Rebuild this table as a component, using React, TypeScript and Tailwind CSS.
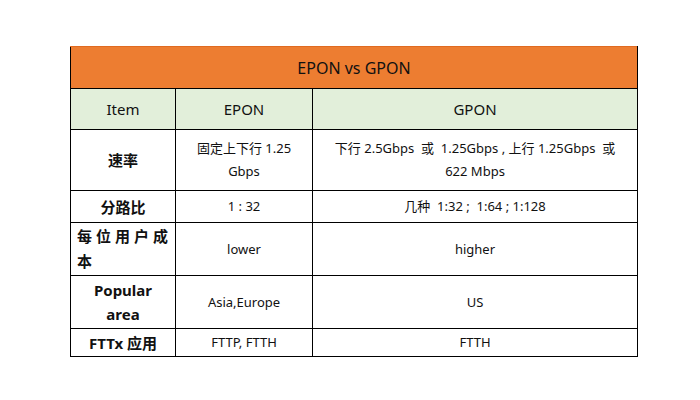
const rows = [
  { h: "h-[61px]", item: "速率", epon: "固定上下行 1.25 Gbps", gpon: "下行 2.5Gbps\u00a0 或\u00a0 1.25Gbps\u00a0,\u00a0上行 1.25Gbps\u00a0 或 622\u00a0Mbps" },
  { h: "h-[32px]", item: "分路比", epon: "1\u00a0:\u00a032", gpon: "几种\u00a0 1:32 ;\u00a0 1:64 ; 1:128" },
  { h: "h-[53px]", item: "每位用户成本", epon: "lower", gpon: "higher", justify: true },
  { h: "h-[53px]", item: "Popular area", epon: "Asia,Europe", gpon: "US" },
  { h: "h-[28px]", item: "FTTx 应用", epon: "FTTP, FTTH", gpon: "FTTH" },
];

const App = () => {
  return (
    <div
      className="w-[700px] h-[400px] bg-white pt-[46px] pl-[70px] text-[#111]"
      style={{ fontFamily: '"Noto Sans", "Noto Sans CJK SC", sans-serif' }}
    >
      <table className="w-[567px] table-fixed border-collapse">
        <colgroup>
          <col className="w-[105px]" />
          <col className="w-[137px]" />
          <col className="w-[325px]" />
        </colgroup>
        <tbody>
          <tr className="h-[42px]">
            <td
              colSpan={3}
              className="bg-[#ed7d31] border-t border-t-[#e06a20] border-x border-x-black border-b border-b-black text-center text-[16px]"
            >
              EPON vs GPON
            </td>
          </tr>
          <tr className="h-[41px] bg-[#e2efda] text-[15px]">
            <td className="border border-black text-center">Item</td>
            <td className="border border-black text-center">EPON</td>
            <td className="border border-black text-center">GPON</td>
          </tr>
          {rows.map((r) => (
            <tr key={r.item} className={r.h}>
              <td
                className={
                  r.justify
                    ? "border border-black pl-[6px] pr-[5px] text-[15px] font-bold leading-[25px] text-justify tracking-[2px]"
                    : "border border-black px-[7px] text-center text-[15px] font-bold leading-[24px]"
                }
              >
                {r.item}
              </td>
              <td className="border border-black px-[8px] text-center text-[13px] leading-[23px]">
                {r.epon}
              </td>
              <td className="border border-black px-[8px] text-center text-[13px] leading-[23px]">
                {r.gpon}
              </td>
            </tr>
          ))}
        </tbody>
      </table>
    </div>
  );
};

export default App;
